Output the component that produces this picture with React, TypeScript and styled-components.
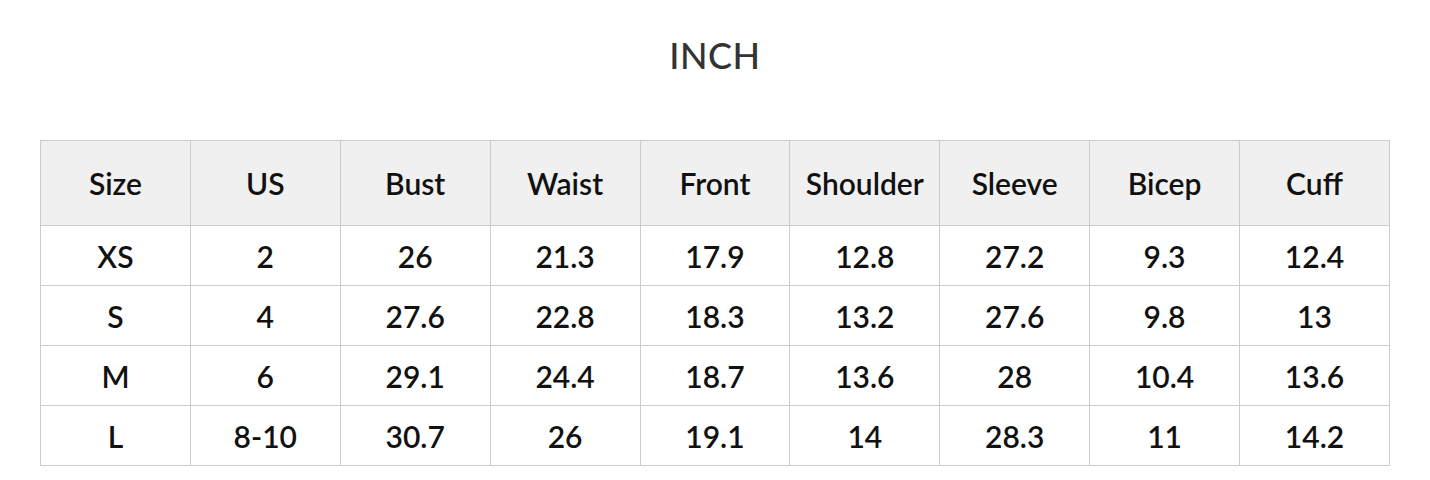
import React from 'react';
import styled, { createGlobalStyle } from 'styled-components';

const GlobalStyle = createGlobalStyle`
  html, body {
    margin: 0;
    padding: 0;
    background: #ffffff;
  }
  body {
    font-family: Lato, 'Noto Sans', 'Liberation Sans', sans-serif;
    color: #111111;
  }
`;

const Page = styled.div`
  width: 1430px;
  height: 480px;
  display: flex;
  flex-direction: column;
  align-items: center;
  box-sizing: border-box;
  padding: 0 40px;
`;

const Title = styled.h1`
  margin: 0;
  height: 110px;
  line-height: 110px;
  font-size: 36px;
  font-weight: 500;
  color: #333333;
  letter-spacing: 0.5px;
`;

const Table = styled.table`
  margin-top: 30px;
  width: 1350px;
  border-collapse: collapse;
  table-layout: fixed;
`;

const HeadCell = styled.th`
  height: 84px;
  background: #f0f0f0;
  border: 1px solid #cccccc;
  font-size: 30px;
  font-weight: 600;
  text-align: center;
  vertical-align: middle;
  padding: 0;
`;

const Cell = styled.td`
  height: 59px;
  border: 1px solid #cccccc;
  font-size: 30px;
  font-weight: 600;
  text-align: center;
  vertical-align: middle;
  padding: 0;
`;

const columns = ['Size', 'US', 'Bust', 'Waist', 'Front', 'Shoulder', 'Sleeve', 'Bicep', 'Cuff'];

const rows: string[][] = [
  ['XS', '2', '26', '21.3', '17.9', '12.8', '27.2', '9.3', '12.4'],
  ['S', '4', '27.6', '22.8', '18.3', '13.2', '27.6', '9.8', '13'],
  ['M', '6', '29.1', '24.4', '18.7', '13.6', '28', '10.4', '13.6'],
  ['L', '8-10', '30.7', '26', '19.1', '14', '28.3', '11', '14.2'],
];

const App = () => {
  return (
    <>
      <GlobalStyle />
      <Page>
        <Title>INCH</Title>
        <Table>
          <thead>
            <tr>
              {columns.map((c) => (
                <HeadCell key={c}>{c}</HeadCell>
              ))}
            </tr>
          </thead>
          <tbody>
            {rows.map((r) => (
              <tr key={r[0]}>
                {r.map((v, i) => (
                  <Cell key={i}>{v}</Cell>
                ))}
              </tr>
            ))}
          </tbody>
        </Table>
      </Page>
    </>
  );
};

export default App;
